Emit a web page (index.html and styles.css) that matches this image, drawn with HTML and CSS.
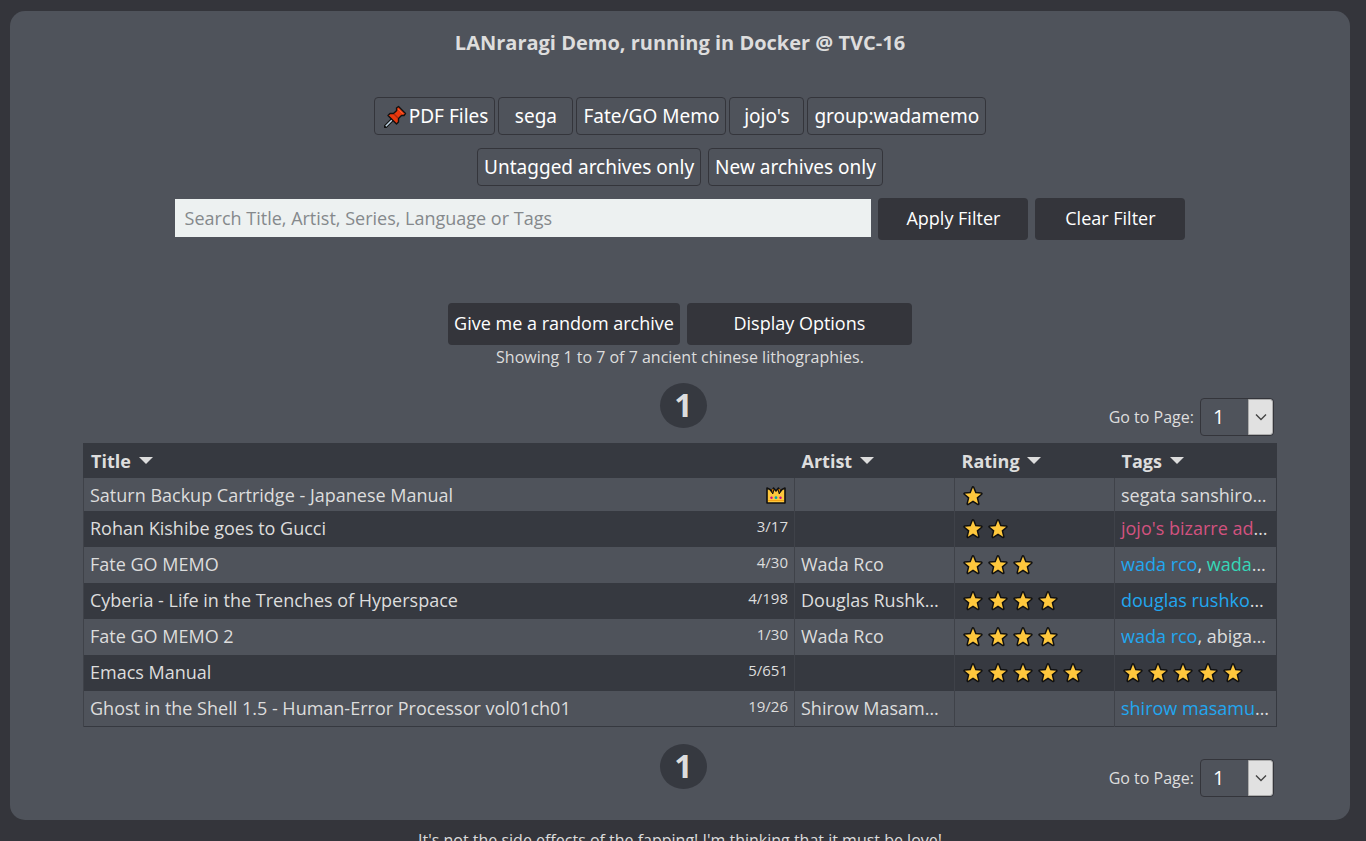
FILE: index.html
```html
<!DOCTYPE html>
<html lang="en">
<head>
<meta charset="utf-8">
<title>LANraragi Demo</title>
<link rel="stylesheet" href="styles.css">
</head>
<body>
<svg class="defs" aria-hidden="true">
  <symbol id="star" viewBox="0 0 20 20"><path d="M10 1.6 12.3 7.3 18.2 7.7 13.6 11.6 15.1 17.8 10 14.5 4.9 17.8 6.4 11.6 1.8 7.7 7.7 7.3Z" fill="#ffc83d" stroke="#111" stroke-width="3" stroke-linejoin="round" paint-order="stroke"/></symbol>
  <symbol id="sort" viewBox="0 0 14 7"><path d="M0 0H14L7 7Z" fill="#ddd"/></symbol>
  <symbol id="chevron" viewBox="0 0 12 8"><path d="M1 1.5 6 6.5 11 1.5" fill="none" stroke="#444" stroke-width="1.4"/></symbol>
</svg>
<main class="panel">
  <h1 class="heading">LANraragi Demo, running in Docker @ TVC-16</h1>
  <div class="tags">
    <button class="tag tag-pinned" type="button"><svg class="pin" viewBox="0 0 23 23" aria-hidden="true"><path d="M8.5 14.5 1.5 21.5" stroke="#111" stroke-width="3.6" stroke-linecap="round"/><path d="M9 14 1.8 21.2" stroke="#c3d8e8" stroke-width="1.5"/><path d="M14.5 1.5 21.5 8.5 20 10.5 17.5 10.5 14.5 13.5 14.5 17 12.5 19 4 10.5 6 8.5 9.5 8.5 12.7 5.5 12.5 3Z" fill="#e8380d" stroke="#111" stroke-width="1.4" stroke-linejoin="round"/><path d="M10 9 14 13" stroke="#a9280c" stroke-width="1.2"/><path d="M14.3 4 19 8.8" stroke="#ff6a3a" stroke-width="1"/></svg>PDF Files</button>
    <button class="tag" type="button">sega</button>
    <button class="tag" type="button">Fate/GO Memo</button>
    <button class="tag" type="button">jojo's</button>
    <button class="tag" type="button">group:wadamemo</button>
  </div>
  <div class="tags tags-wide">
    <button class="tag" type="button">Untagged archives only</button>
    <button class="tag" type="button">New archives only</button>
  </div>
  <form class="search">
    <input class="search-box" type="text" aria-label="Search archives" placeholder="Search Title, Artist, Series, Language or Tags">
    <button class="action" type="button">Apply Filter</button>
    <button class="action" type="button">Clear Filter</button>
  </form>
  <div class="actions">
    <button class="action" type="button">Give me a random archive</button>
    <button class="action action-wide" type="button">Display Options</button>
  </div>
  <p class="count">Showing 1 to 7 of 7 ancient chinese lithographies.</p>
  <section class="library">
    <nav class="pager">
      <a class="page" href="#">1</a>
      <div class="goto"><label for="page-top">Go to Page:</label><span class="picker"><select id="page-top"><option>1</option></select><span class="drop"><svg viewBox="0 0 12 8"><use href="#chevron"/></svg></span></span></div>
    </nav>
    <table class="archives">
      <colgroup><col><col class="col-artist"><col class="col-rating"><col class="col-tags"></colgroup>
      <thead>
        <tr><th>Title <svg class="sort"><use href="#sort"/></svg></th><th>Artist <svg class="sort"><use href="#sort"/></svg></th><th>Rating <svg class="sort"><use href="#sort"/></svg></th><th>Tags <svg class="sort"><use href="#sort"/></svg></th></tr>
      </thead>
      <tbody>
        <tr class="short"><td><div class="name"><a href="#">Saturn Backup Cartridge - Japanese Manual</a><svg class="crown" viewBox="0 0 20 17" role="img" aria-label="New"><path d="M1 1 4 2.5 6 5 7.5 1 10 4 12.5 1 14 5 16 2.5 19 1V16H1Z" fill="#ffc83d" stroke="#111" stroke-width="1.6" stroke-linejoin="round"/><path d="M5 2 6.7 7 8 2.5M12 2.5 13.3 7 15 2" fill="#d67d00" stroke="#111" stroke-width="1"/><path d="M2 13.5H18" stroke="#f5a313" stroke-width="1"/><circle cx="5.5" cy="10.7" r="1.2" fill="#c40b91"/><circle cx="10" cy="10.7" r="1.4" fill="#00a3ad"/><circle cx="14.5" cy="10.7" r="1.2" fill="#c40b91"/></svg></div></td><td></td><td><div class="stars"><svg><use href="#star"/></svg></div></td><td>segata sanshiro…</td></tr>
        <tr><td><div class="name"><a href="#">Rohan Kishibe goes to Gucci</a><span class="progress">3/17</span></div></td><td></td><td><div class="stars"><svg><use href="#star"/></svg><svg><use href="#star"/></svg></div></td><td><span class="series">jojo's bizarre ad</span>…</td></tr>
        <tr><td><div class="name"><a href="#">Fate GO MEMO</a><span class="progress">4/30</span></div></td><td>Wada Rco</td><td><div class="stars"><svg><use href="#star"/></svg><svg><use href="#star"/></svg><svg><use href="#star"/></svg></div></td><td><span class="artist">wada rco</span>, <span class="group">wada</span>…</td></tr>
        <tr><td><div class="name"><a href="#">Cyberia - Life in the Trenches of Hyperspace</a><span class="progress">4/198</span></div></td><td>Douglas Rushk…</td><td><div class="stars"><svg><use href="#star"/></svg><svg><use href="#star"/></svg><svg><use href="#star"/></svg><svg><use href="#star"/></svg></div></td><td><span class="artist">douglas rushko</span>…</td></tr>
        <tr><td><div class="name"><a href="#">Fate GO MEMO 2</a><span class="progress">1/30</span></div></td><td>Wada Rco</td><td><div class="stars"><svg><use href="#star"/></svg><svg><use href="#star"/></svg><svg><use href="#star"/></svg><svg><use href="#star"/></svg></div></td><td><span class="artist">wada rco</span>, abiga…</td></tr>
        <tr><td><div class="name"><a href="#">Emacs Manual</a><span class="progress">5/651</span></div></td><td></td><td><div class="stars"><svg><use href="#star"/></svg><svg><use href="#star"/></svg><svg><use href="#star"/></svg><svg><use href="#star"/></svg><svg><use href="#star"/></svg></div></td><td><div class="stars"><svg><use href="#star"/></svg><svg><use href="#star"/></svg><svg><use href="#star"/></svg><svg><use href="#star"/></svg><svg><use href="#star"/></svg></div></td></tr>
        <tr><td><div class="name"><a href="#">Ghost in the Shell 1.5 - Human-Error Processor vol01ch01</a><span class="progress">19/26</span></div></td><td>Shirow Masam…</td><td></td><td><span class="artist">shirow masamu</span>…</td></tr>
      </tbody>
    </table>
    <nav class="pager pager-bottom">
      <a class="page" href="#">1</a>
      <div class="goto"><label for="page-bottom">Go to Page:</label><span class="picker"><select id="page-bottom"><option>1</option></select><span class="drop"><svg viewBox="0 0 12 8"><use href="#chevron"/></svg></span></span></div>
    </nav>
  </section>
</main>
<footer class="footer">It's not the side effects of the fapping! I'm thinking that it must be love!</footer>
</body>
</html>
```

FILE: styles.css
```css
* { box-sizing: border-box; }
body {
  margin: 0;
  padding: 11px 16px 0 10px;
  background: #34353b;
  color: #ddd;
  font: 16px/22px "Open Sans", sans-serif;
}
a { color: inherit; text-decoration: none; }
button, input, select { font-family: inherit; }
.defs { position: absolute; width: 0; height: 0; }
.panel {
  padding: 18px 0 23px;
  border-radius: 15px;
  background: #4f535b;
}
.heading {
  margin: 0 0 40px;
  font-size: 20px;
  line-height: 28px;
  text-align: center;
}
.tags {
  display: flex;
  justify-content: center;
  gap: 3px;
  margin-bottom: 13px;
}
.tags-wide { gap: 7px; margin-bottom: 12px; }
.tag {
  display: flex;
  align-items: center;
  justify-content: center;
  min-width: 75px;
  height: 38px;
  padding: 0 6px;
  border: 1px solid #34353b;
  border-radius: 4px;
  background: transparent;
  color: #fff;
  font-family: "Noto Sans", sans-serif;
  font-size: 19px;
}
.tag-pinned { padding-left: 9px; }
.pin { width: 23px; height: 23px; margin-right: 2px; }
.search {
  display: flex;
  justify-content: center;
  gap: 7px;
  margin-bottom: 63px;
}
.search-box {
  flex: 0 1 52%;
  height: 38px;
  margin-top: 1px;
  padding: 0 10px;
  border: 0;
  background: #edf1f1;
  color: #34353b;
  font-size: 18px;
}
.search-box::placeholder { color: #85898c; }
.action {
  min-width: 150px;
  height: 42px;
  padding: 0 6px 2px;
  border: 0;
  border-radius: 4px;
  background: #34353b;
  color: #fff;
  font-size: 18px;
}
.actions { display: flex; justify-content: center; gap: 7px; }
.action-wide { min-width: 225px; }
.count { margin: 1px 0 15px; text-align: center; }
.library { padding: 0 73px; }
.pager {
  display: grid;
  grid-template-columns: 1fr auto 1fr;
  padding: 0 3px 0 10px;
}
.pager-bottom { margin-top: 17px; }
.page {
  grid-column: 2;
  width: 47px;
  height: 45px;
  border-radius: 50%;
  background: #363940;
  font-size: 32px;
  font-weight: 700;
  line-height: 44px;
  text-align: center;
}
.goto {
  display: flex;
  align-items: center;
  justify-content: flex-end;
  gap: 6px;
  padding-top: 15px;
}
.picker { position: relative; display: block; height: 38px; }
.picker select {
  width: 74px;
  height: 38px;
  padding: 0 12px 2px;
  border: 1px solid #34353b;
  border-radius: 4px;
  appearance: none;
  background: transparent;
  color: #fff;
  font-size: 20px;
}
.drop {
  position: absolute;
  top: 1px;
  right: 1px;
  bottom: 1px;
  display: flex;
  align-items: center;
  justify-content: center;
  width: 25px;
  border: 1px solid #adadad;
  border-radius: 0 3px 3px 0;
  background: #e1e1e1;
  pointer-events: none;
}
.drop svg { width: 12px; height: 8px; }
.archives {
  width: 100%;
  margin-top: 7px;
  border: 1px solid #363940;
  border-collapse: collapse;
  table-layout: fixed;
  font-size: 18px;
  line-height: 26px;
}
.col-artist, .col-rating { width: 160px; }
.col-tags { width: 162px; }
th {
  height: 34px;
  padding: 0 7px;
  background: #363940;
  text-align: left;
}
.sort { width: 14px; height: 7px; margin: 0 0 4px 3px; }
td {
  height: 36px;
  padding: 4px 6px 0;
  border-left: 1px solid #3f4249;
  overflow: hidden;
  vertical-align: top;
  white-space: nowrap;
}
.short td { height: 33px; }
tbody tr:nth-child(even) { background: #363940; }
.name { display: flex; justify-content: space-between; }
.progress { font-size: 15px; line-height: 22px; }
.crown { width: 20px; height: 17px; margin: 5px 2px 0 0; }
.stars { display: flex; gap: 5px; padding: 4px 2px 0; }
.stars svg { width: 20px; height: 20px; }
.series { color: #d2527f; }
.artist { color: #22a7f0; }
.group { color: #36d7b7; }
.footer { padding-top: 9px; text-align: center; }
```
